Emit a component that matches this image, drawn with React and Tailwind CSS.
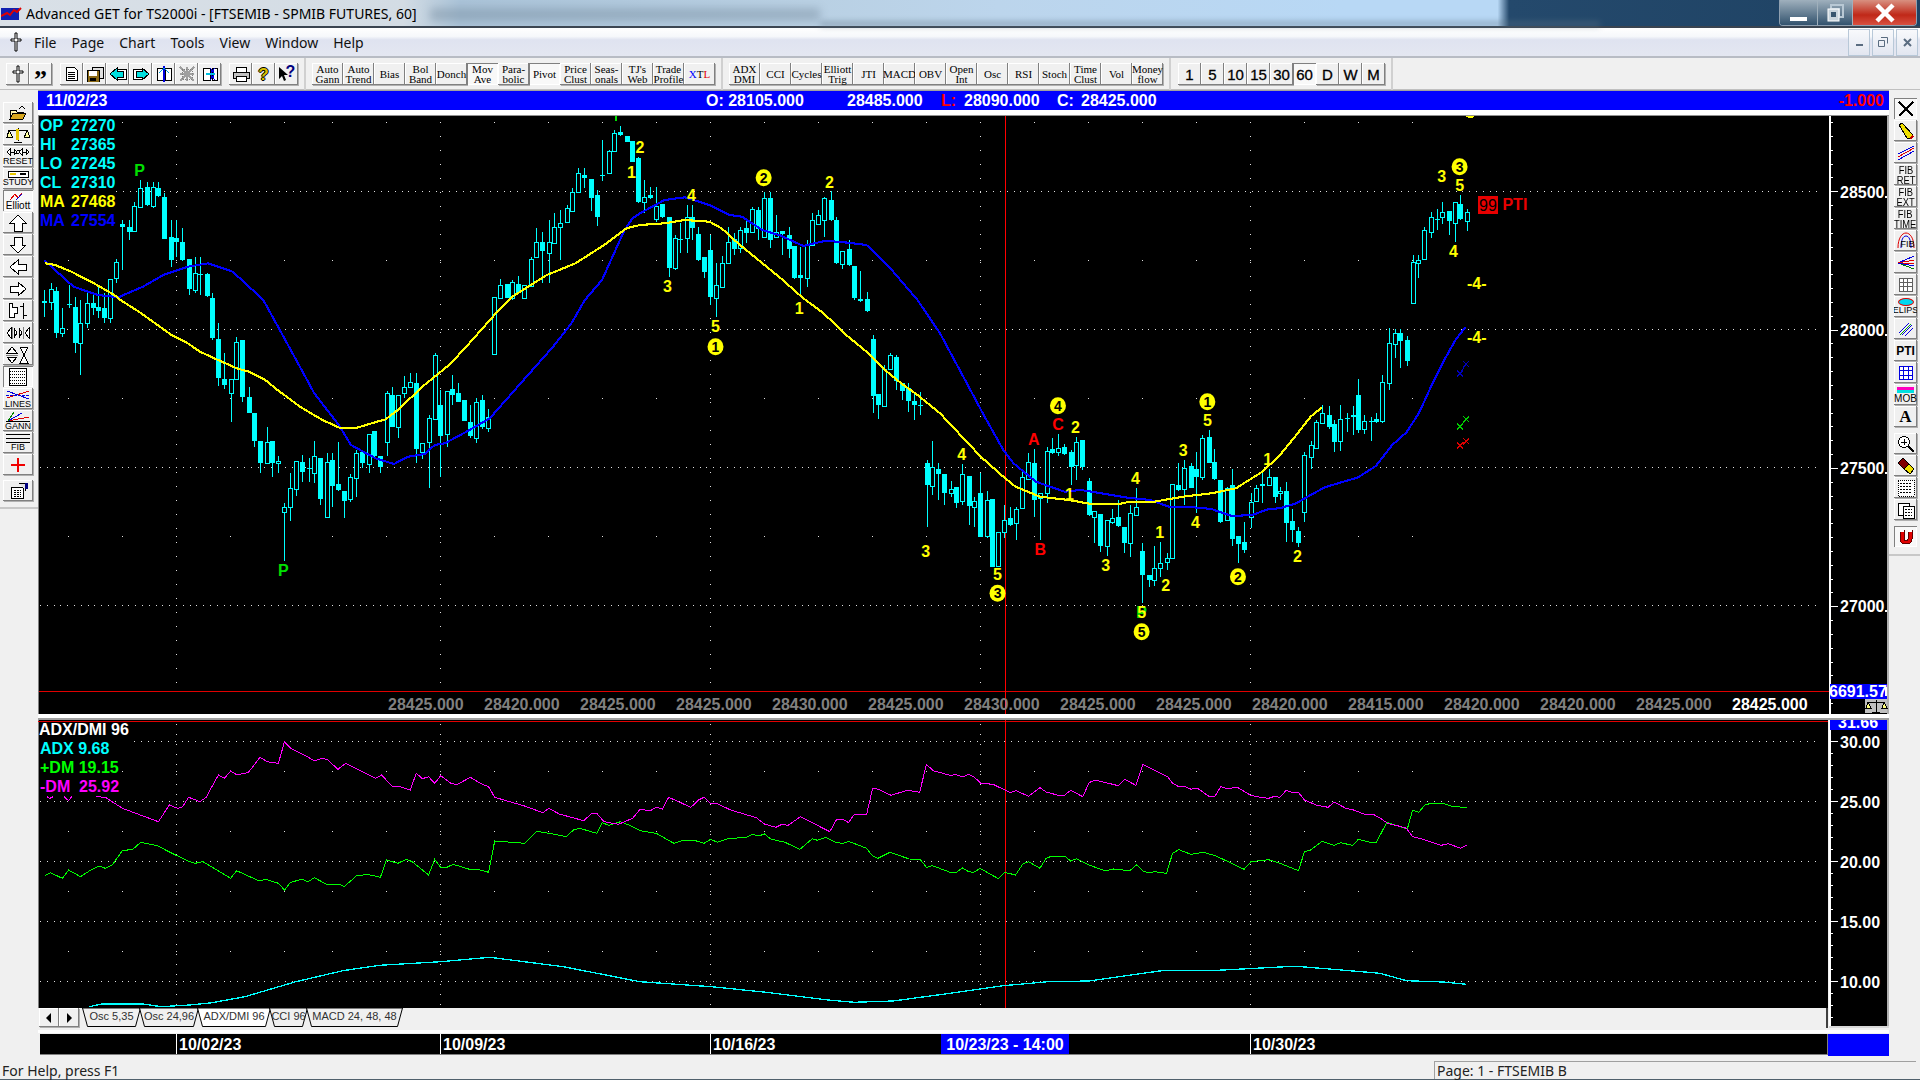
import React from "react";

const K = 0.40816;
const X = (u) => u * K;
const Y = (v) => v / 3;
const sh = (a, du, dv) => a.map(([u, h, t, b, l, f]) => [u + du, h + dv, t + dv, b + dv, l + dv, f]);
const pl = (a, du = 0, dv = 0) => a.map(([u, v]) => [u + du, v + dv]);
const W = (a) => a.map(([u, v]) => `${X(u).toFixed(1)},${Y(v).toFixed(1)}`).join(" ");
const WL = (a) => a.map(([u, v]) => `${X(u).toFixed(1)},${(680 + v / 3).toFixed(1)}`).join(" ");

const c1 = [[109,870,903,908,950,0],[124,848,868,906,930,1],[138,860,872,1000,1015,0],[153,925,985,1000,1010,1],[168,855,912,916,925,0],[183,890,920,1028,1058,0],[197,900,968,1030,1125,1],[212,870,908,968,985,1],[227,875,908,925,945,0],[241,860,922,933,955,0],[256,880,925,955,970,0],[270,838,838,955,970,1],[285,778,787,835,850,1],[300,660,672,682,810,0],[315,660,680,695,720,0],[329,605,617,692,695,1],[344,540,565,620,622,1],[359,545,562,615,618,0],[374,545,562,618,625,1],[388,545,565,588,590,0],[403,580,592,716,718,0],[418,660,712,780,800,0],[432,660,715,725,770,0],[447,685,727,780,782,0],[462,778,778,866,885,0],[477,770,820,870,880,1],[491,770,822,826,885,0],[506,820,822,888,890,0],[520,880,893,1013,1020,0]];
const c4 = [[535,68,118,233,258,0],[550,160,238,255,268,0],[565,238,238,280,365,1],[579,112,127,238,240,1],[594,120,120,292,305,0],[609,260,292,338,340,0],[623,338,340,422,440,0],[638,423,423,490,520,0],[653,380,427,490,492,1],[667,423,423,488,532,0],[682,468,482,490,520,1],[697,610,622,635,782,1],[711,518,565,620,662,1],[726,482,482,568,587,1],[741,465,487,515,545,0],[756,475,503,506,545,0],[770,423,468,520,550,1],[785,475,475,597,615,0],[800,460,487,650,652,1],[814,458,480,557,620,0],[829,427,553,570,572,0],[843,573,573,603,653,0],[858,522,532,598,607,1],[873,450,460,535,590,1],[888,457,457,490,505,0],[903,403,403,492,518,1],[917,393,393,468,470,0],[932,468,468,500,520,0],[947,272,280,425,467,1],[961,262,285,380,382,0],[976,285,285,382,413,1],[991,228,260,280,293,1],[1005,220,247,262,264,1],[1020,220,250,447,488,0],[1035,428,428,455,477,1],[1050,345,355,425,563,1],[1065,160,165,358,360,1],[1079,270,316,407,530,0],[1094,272,272,402,440,1],[1108,225,268,285,315,0],[1123,250,280,305,307,0],[1138,300,300,362,364,0],[1152,315,367,408,415,0],[1167,293,305,415,430,1],[1181,285,300,380,388,0],[1196,328,350,383,395,1]];
const c1b = [[1211,890,892,1063,1065,1],[1226,838,855,893,895,1],[1241,853,853,893,895,0],[1255,840,847,895,900,1],[1270,828,853,878,880,0],[1285,855,855,893,895,1],[1300,770,778,858,860,1],[1314,685,727,772,774,1],[1329,695,725,752,850,0],[1344,660,725,760,850,1],[1358,640,680,728,730,1],[1373,630,670,682,780,1],[1388,615,625,665,667,1],[1402,565,577,633,635,1],[1417,505,520,575,577,1],[1432,505,525,535,565,0],[1447,537,537,593,633,0],[1462,570,586,650,678,0],[1476,420,525,528,542,0],[1491,450,452,520,522,1],[1505,390,400,452,454,1],[1520,377,397,405,407,0],[1535,408,408,425,427,0],[1549,422,422,485,487,0],[1564,470,475,605,610,0]];
const c2 = [[11,540,592,607,640,1],[25,560,585,595,597,0],[40,560,618,658,665,1],[55,612,612,652,654,0],[70,652,652,803,830,0],[85,705,715,805,810,1],[99,670,716,719,760,0],[114,615,650,715,760,1],[128,615,652,685,720,0],[143,680,702,780,782,0],[158,770,770,815,835,0],[172,705,750,890,915,0],[187,790,855,893,952,1],[202,768,790,860,862,1],[216,680,725,790,792,1],[231,700,717,747,765,0],[246,680,690,745,760,1],[260,660,685,700,730,0],[275,620,628,695,697,1],[290,620,630,686,720,0],[305,575,595,712,714,1],[319,575,595,720,745,0],[334,645,695,710,712,1],[349,693,693,702,765,0],[364,680,705,747,775,0],[378,738,738,835,838,0],[393,740,825,833,885,0],[408,720,735,835,860,1],[422,640,660,735,737,1],[437,630,645,673,675,1],[452,590,595,660,710,1],[467,572,600,660,662,0],[481,650,660,790,792,0],[496,752,752,792,808,1],[511,720,748,795,797,0],[525,798,798,893,900,0],[540,812,897,903,905,0],[555,875,897,933,935,0]];
const c5 = [[570,105,118,288,340,0],[584,283,283,315,357,0],[599,195,207,317,319,1],[613,160,165,207,209,1],[628,165,172,243,270,0],[643,250,250,272,300,0],[657,250,265,303,335,0],[672,280,303,315,360,0],[687,275,316,319,345,0],[702,480,490,555,680,0],[716,423,502,557,585,1],[731,490,507,522,600,0],[746,522,522,578,615,0],[761,543,568,580,590,1],[775,562,562,608,625,0],[790,492,523,602,615,1],[805,528,528,618,675,0],[819,590,602,620,680,1],[834,520,580,710,712,0],[849,573,600,707,715,1],[863,597,597,800,802,0],[878,695,695,797,799,1],[893,615,661,695,713,1],[907,622,655,675,677,0],[922,620,628,668,720,1],[937,515,532,623,625,1],[951,460,487,537,539,1],[966,447,490,600,650,0],[981,580,580,595,720,1],[996,440,454,578,608,1],[1010,415,447,460,462,0],[1025,403,445,455,468,1],[1040,432,440,462,464,0],[1055,450,457,500,555,0],[1069,412,425,494,540,1],[1084,420,420,500,510,0],[1099,535,543,645,647,0],[1113,633,633,650,728,1],[1128,642,642,738,755,0],[1143,660,660,737,768,1],[1157,628,655,665,672,1],[1172,600,652,677,680,0],[1187,680,680,730,760,0],[1201,615,640,730,770,1],[1216,565,622,645,648,1],[1231,730,753,825,910,0],[1246,825,825,840,860,0],[1260,738,805,840,858,1],[1275,725,790,803,830,1],[1290,760,775,785,810,1],[1304,552,552,775,777,1],[1319,490,555,570,572,0],[1334,480,503,567,615,1],[1349,490,498,563,565,0],[1363,455,508,530,640,0],[1378,405,415,530,540,1],[1393,390,412,488,490,0],[1407,447,487,537,539,0],[1422,540,540,665,670,0],[1437,560,563,660,662,1],[1451,507,555,717,738,0],[1466,708,708,732,788,0],[1481,665,727,750,760,0],[1496,580,607,652,685,1],[1510,555,563,603,605,1],[1525,520,552,557,610,0],[1540,508,530,555,557,1],[1555,532,532,590,610,0]];
const c6 = [[1,560,572,580,600,1],[15,545,573,668,725,0],[30,628,663,690,725,0],[45,680,693,728,740,0],[60,457,466,635,665,1],[75,423,436,470,507,1],[89,360,367,443,445,1],[104,315,340,370,372,1],[119,318,345,380,388,0],[133,360,372,425,455,0],[148,315,358,422,453,1],[163,340,353,356,395,0],[178,318,345,350,405,0],[192,238,285,390,400,0],[207,345,362,388,402,1],[222,350,362,365,422,0],[236,340,358,367,369,0],[251,225,247,362,370,1],[266,85,130,250,270,1],[281,88,100,133,175,1],[295,87,100,122,203,0],[310,108,120,182,198,0]];
const c3 = [[325,765,787,908,910,1],[339,765,780,790,835,1],[354,680,690,778,780,1],[369,635,650,695,713,1],[384,628,657,660,690,0],[398,605,637,652,672,1],[413,632,632,662,705,0],[428,605,607,670,725,1],[442,585,612,658,660,0],[457,628,637,662,692,1]];
const candles = [...c1, ...sh(c4, 0, 900), ...c1b, ...sh(c2, 1568, 0), ...sh(c5, 1568, 900), ...sh(c6, 3136, 900), ...sh(c3, 3136, 0)];

const yellowMA = [...pl([[110,790],[135,795],[175,815],[230,850],[280,885],[295,900]]), ...pl([[340,35],[380,70],[420,105],[460,130],[490,155],[525,175],[580,205],[610,215],[650,240],[680,270],[735,320],[790,360],[835,385],[870,385],[915,368],[945,358],[980,325],[1030,265],[1065,230],[1100,195],[1135,150],[1175,95],[1215,40]],0,900), ...pl([[1255,890],[1340,825],[1410,790],[1480,735],[1535,685],[1568,675]]), ...pl([[60,670],[110,660],[170,665],[200,685],[240,730],[300,790],[345,835],[400,895]],1568), ...pl([[450,40],[500,100],[555,155],[600,210],[640,250],[680,285],[735,340],[785,405],[835,470],[890,530],[920,560],[980,590],[1050,600],[1110,613],[1170,613],[1200,605],[1260,605],[1330,590],[1400,580],[1460,565],[1525,515],[1568,465]],1568,900), ...pl([[40,405],[75,350],[103,322]],3136,900)];
const blueMA = [...pl([[108,780],[135,810],[180,860],[240,885],[290,892],[350,860],[400,825],[460,800],[510,790],[570,815],[610,860],[645,900]]), ...pl([[690,100],[730,190],[770,280],[830,375],[860,435],[920,475],[965,492],[1000,470],[1040,462],[1065,435],[1090,430],[1140,397],[1200,355],[1290,230],[1355,140],[1400,70],[1433,0]],0,900), ...pl([[1475,840],[1530,690],[1550,655],[1568,640]]), ...pl([[60,600],[110,592],[170,615],[220,645],[250,650],[300,690],[345,707],[400,738],[455,722],[510,728],[555,735],[610,800],[680,900]],1568), ...pl([[735,100],[790,225],[840,340],[890,450],[915,490],[970,545],[1040,575],[1080,570],[1130,580],[1195,593],[1250,600],[1300,622],[1340,620],[1400,627],[1450,648],[1500,645],[1540,627],[1568,625]],1568,900), ...pl([[40,610],[75,585],[110,562],[150,547],[190,533],[235,498],[275,435],[310,397],[340,340],[370,260],[400,185],[430,120],[455,80]],3136,900)];

const magenta = [...pl([[235,350],[258,352],[300,385],[388,425],[415,375],[435,385],[447,381],[462,352],[490,365],[505,352],[535,285],[550,295],[565,273],[580,284],[608,278],[637,232],[655,245],[682,250],[697,185],[712,205],[745,225],[770,242],[790,235],[803,240],[828,268],[847,250],[920,295],[935,285],[960,318],[975,318],[1005,330],[1020,280],[1035,296],[1050,290],[1065,310],[1080,287],[1105,310],[1120,314],[1152,292],[1180,312],[1197,320],[1212,352],[1285,378],[1330,398],[1345,385],[1370,402],[1430,422],[1450,400],[1462,400],[1480,425],[1515,433],[1550,415],[1568,388]]), ...pl([[25,392],[40,382],[55,387],[70,352],[125,382],[143,360],[157,352],[173,370],[188,370],[222,390],[285,413],[305,432],[333,442],[348,433],[363,436],[393,410],[465,455],[482,418],[497,418],[511,428],[525,403],[555,405],[570,325],[585,328],[615,346],[655,331],[685,337],[702,253],[718,272],[760,286],[775,284],[790,291],[805,283],[818,290],[835,310],[865,313],[907,338],[922,332],[952,349],[980,323],[995,336],[1025,346],[1040,346],[1055,331],[1085,350],[1100,308],[1115,300],[1172,317],[1187,298],[1215,316],[1232,253],[1293,290],[1305,310],[1320,320],[1335,319],[1350,328],[1365,324],[1395,350],[1408,350],[1423,320],[1435,325],[1465,323],[1495,345],[1510,350],[1540,355],[1555,349],[1568,352]],1568), ...pl([[15,331],[30,337],[45,337],[60,360],[90,376],[118,382],[133,366],[160,384],[180,390],[205,402],[230,404],[245,414],[265,431],[290,438],[310,445],[325,470],[350,478],[395,496],[412,491],[443,505],[457,496]],3136)];
const green = [...pl([[110,587],[123,578],[153,595],[168,570],[197,590],[220,572],[243,558],[258,565],[275,555],[300,512],[325,508],[345,487],[385,497],[430,525],[465,545],[478,550],[497,545],[565,595],[580,572],[635,603],[652,598],[682,610],[697,630],[712,607],[740,598],[755,605],[770,593],[800,613],[832,613],[843,620],[873,588],[900,583],[932,592],[947,540],[975,550],[995,538],[1010,545],[1050,585],[1065,538],[1080,563],[1093,563],[1110,553],[1150,568],[1170,568],[1197,577],[1212,483],[1285,490],[1315,454],[1345,460],[1387,470],[1405,450],[1420,445],[1462,460],[1475,428],[1492,436],[1520,425],[1545,437],[1568,452]]), ...pl([[40,460],[83,490],[105,481],[130,480],[157,490],[173,478],[190,487],[215,476],[260,472],[275,463],[290,468],[305,462],[320,477],[355,487],[392,508],[422,476],[435,481],[455,472],[482,488],[497,490],[511,484],[555,505],[570,528],[583,535],[612,517],[660,537],[687,539],[702,562],[717,557],[760,577],[775,577],[790,564],[805,575],[818,577],[833,565],[878,596],[893,577],[920,585],[938,552],[952,545],[980,565],[995,535],[1010,528],[1040,528],[1055,543],[1070,536],[1100,555],[1140,573],[1160,567],[1200,572],[1217,554],[1232,573],[1246,578],[1260,575],[1290,580],[1305,520],[1320,509],[1350,523],[1380,517],[1410,527],[1480,568],[1497,545],[1540,539],[1568,550]],1568), ...pl([[45,572],[60,515],[75,510],[103,484],[133,496],[148,488],[178,496],[192,478],[220,487],[236,487],[262,427],[312,447],[325,391],[340,397],[355,375],[370,370],[400,370],[420,378],[457,383]],3136)];
const adx = [...pl([[218,980],[250,972],[350,972],[395,980],[465,975],[520,968],[600,950],[725,905],[840,872],[930,856],[1080,845],[1200,832],[1380,860],[1568,905]]), ...pl([[175,920],[310,937],[460,960],[525,967],[620,963],[760,940],[890,917],[1000,905],[1100,903],[1285,871],[1415,871],[1568,861]],1568), ...pl([[40,859],[130,868],[245,880],[310,902],[400,906],[457,913]],3136)];

const majors = [176, 440, 710, 980, 1250];
const sparse = [68,122,176,230,284,332,386,440,494,548,602,656,710,764,818,872,926,980,1034,1088,1142,1196,1250,1304,1358,1412];

const L1 = 1568, V5 = 900;
const nums = [
  [342,510,"P","#00e000"],[694,1710,"P","#00e000"],[L1+1229,V5+937,"P","#00e000"],[1547,517,"1"],[1568,443,"2"],
  [L1+126,585,"4"],[L1+464,546,"2"],[L1+67,858,"3"],[L1+390,V5+25,"1"],[L1+185,V5+80,"5"],
  [L1+700,V5+753,"3"],[L1+788,V5+462,"4"],[L1+876,V5+822,"5"],[L1+965,V5+418,"A","#ff0000"],[L1+981,V5+748,"B","#ff0000"],[L1+1024,V5+373,"C","#ff0000"],
  [L1+1067,V5+382,"2"],[L1+1052,V5+583,"1"],[L1+1214,V5+535,"4"],[L1+1141,V5+795,"3"],[L1+1273,V5+697,"1"],[L1+1288,V5+855,"2"],[L1+1229,V5+937,"5"],
  [L1+1331,V5+450,"3"],[L1+1390,V5+360,"5"],[L1+1361,V5+667,"4"],[L1+1538,V5+478,"1"],
  [3136+43,V5+768,"2"],[3136+396,530,"3"],[3136+440,555,"5"],[3136+425,753,"4"],[3136+482,850,"-4-"],[3136+482,V5+112,"-4-"],
];
const circles = [[L1+303,533,"2"],[L1+185,V5+140,"1"],[L1+876,V5+880,"3"],[L1+1024,V5+317,"4"],[L1+1229,V5+995,"5"],[L1+1390,V5+305,"1"],[L1+1465,V5+830,"2"],[3136+440,500,"3"]];
const bottoms = ["28425","28420","28425","28425","28430","28425","28430","28425","28425","28420","28415","28420","28420","28425","28425"];

function Candle({ c }) {
  const [u, h, t, b, l, hollow] = c;
  const x = Math.round(X(u));
  const top = Math.round(Y(t)), bot = Math.round(Y(b));
  return (
    <g>
      <line x1={x + 0.5} x2={x + 0.5} y1={Y(h)} y2={Y(l)} stroke="#00ffff" />
      {hollow ? (
        <rect x={x - 1.5} y={top + 0.5} width={4} height={Math.max(bot - top, 2)} fill="#000" stroke="#00ffff" />
      ) : (
        <rect x={x - 2} y={top} width={5} height={Math.max(bot - top, 1)} fill="#00ffff" />
      )}
    </g>
  );
}

const Mark = ({ x, y, c }) => (
  <g stroke={c} fill="none">
    <path d={`M${x - 3} ${y - 3}l6 6m0 -6l-6 6`} />
  </g>
);

function MainChart() {
  const ticks = [];
  for (let y = 191.3 - 13.83 * 5; y < 714; y += 13.83) ticks.push(y);
  const txt = "text-[16px] font-bold";
  return (
    <svg viewBox="38 116 1851 598" width="1851" height="598" className="block shrink-0">
      <defs>
        <clipPath id="ch"><rect x="38" y="116" width="1791" height="598" /></clipPath>
      </defs>
      <rect x="38" y="116" width="1851" height="598" fill="#000" />
      <rect x="38" y="116" width="1" height="598" fill="#808080" />
      <g shapeRendering="crispEdges" clipPath="url(#ch)">
        {[[116,191.5],[40,329.5],[40,467.5],[40,605.5]].map(([x0, y]) => (
          <line key={y} x1={x0} x2="1820" y1={y} y2={y} stroke="#e0e0e0" strokeDasharray="1 5.8" />
        ))}
        {majors.map((x) => (
          <line key={x} x1={x + 0.5} x2={x + 0.5} y1="122" y2="690" stroke="#e0e0e0" strokeDasharray="1 13" />
        ))}
        {[122, 260, 398, 536].map((y) => sparse.filter((x) => y !== 122 || x > 100).map((x) => <rect key={y + "-" + x} x={x} y={y} width="1" height="1" fill="#e0e0e0" />))}
        <line x1="39" x2="1829" y1="691.5" y2="691.5" stroke="#e00000" />
        <line x1="1005.5" x2="1005.5" y1="116" y2="714" stroke="#ff0000" />
        {candles.map((c, i) => <Candle key={i} c={c} />)}
        <polyline points={W(blueMA)} fill="none" stroke="#0000ff" strokeWidth="2.100" />
        <polyline points={W(yellowMA)} fill="none" stroke="#ffff00" strokeWidth="2.100" />
        <path d={`M${X(3136 + 441)} ${Y(V5 + 221)}L${X(3136 + 456)} ${Y(V5 + 192)}`} stroke="#0000c0" fill="none" />
        <Mark x={X(3136 + 441)} y={Y(V5 + 221)} c="#0000c0" /><Mark x={X(3136 + 456)} y={Y(V5 + 192)} c="#0000c0" />
        <path d={`M${X(3136 + 441)} ${Y(V5 + 380)}L${X(3136 + 456)} ${Y(V5 + 358)}`} stroke="#00d000" fill="none" />
        <Mark x={X(3136 + 441)} y={Y(V5 + 380)} c="#00d000" /><Mark x={X(3136 + 456)} y={Y(V5 + 358)} c="#00d000" />
        <path d={`M${X(3136 + 441)} ${Y(V5 + 436)}L${X(3136 + 456)} ${Y(V5 + 424)}`} stroke="#e00000" fill="none" />
        <Mark x={X(3136 + 441)} y={Y(V5 + 436)} c="#e00000" /><Mark x={X(3136 + 456)} y={Y(V5 + 424)} c="#e00000" />
        <rect x={X(1510) - 1} y="116" width="2" height="5" fill="#00e000" />
        <ellipse cx={X(3136 + 466)} cy="109" rx="8" ry="9" fill="#ffff00" />
      </g>
      {nums.map(([u, v, t, col], i) => (
        <text key={i} x={X(u)} y={Y(v)} fill={col || "#ffff00"} textAnchor="middle" dominantBaseline="central" className="text-[16px] font-bold">{t}</text>
      ))}
      {circles.map(([u, v, t], i) => (
        <g key={i}>
          <ellipse cx={X(u)} cy={Y(v)} rx="8" ry="8.500" fill="#ffff00" />
          <text x={X(u)} y={Y(v)} fill="#000" textAnchor="middle" dominantBaseline="central" className="text-[14px] font-bold">{t}</text>
        </g>
      ))}
      <rect x="1478" y="196" width="20" height="18" fill="#e80000" />
      <text x="1488" y="205" fill="#000" textAnchor="middle" dominantBaseline="central" className="text-[16px]">99</text>
      <text x={1280 + 545 * K} y="204.500" fill="#e80000" dominantBaseline="central" className="text-[16px] font-bold">PTI</text>
      {[["OP","27270","#00ffff"],["HI","27365","#00ffff"],["LO","27245","#00ffff"],["CL","27310","#00ffff"],["MA","27468","#ffff00"],["MA","27554","#0000ff"]].map(([a, b, c], i) => (
        <g key={i} fill={c} className={txt}>
          <text x="40" y={125 + 19 * i} dominantBaseline="central">{a}</text>
          <text x="71" y={125 + 19 * i} dominantBaseline="central">{b}</text>
        </g>
      ))}
      {bottoms.map((b, i) => (
        <text key={i} x={388 + 96 * i} y="704" dominantBaseline="central" fill={i === 14 ? "#fff" : "#808080"} className={txt}>{b}.000</text>
      ))}
      <g shapeRendering="crispEdges">
        <rect x="1829" y="116" width="1.5" height="598" fill="#fff" />
        {ticks.map((y, i) => <line key={i} x1="1830" x2={(i % 10 === 5) ? 1838 : 1833} y1={Math.round(y) + 0.5} y2={Math.round(y) + 0.5} stroke="#fff" />)}
        <rect x="1887" y="116" width="2" height="598" fill="#b0b0b0" />
      </g>
      {[[192,"28500"],[330,"28000"],[468,"27500"],[606,"27000"]].map(([y, t]) => (
        <g key={t}>
          <text x="1840" y={y} fill="#fff" dominantBaseline="central" className={txt}>{t}</text>
          <rect x="1885" y={y + 4} width="2" height="2" fill="#fff" />
        </g>
      ))}
      <rect x="1830" y="684" width="57" height="15" fill="#0000ff" />
      <text x="1829" y="691.500" fill="#fff" dominantBaseline="central" className={txt}>6691.57</text>
      <rect x="1885" y="687" width="2" height="9" fill="#fff" />
      <g transform="translate(1865 699)" shapeRendering="crispEdges">
        <rect width="22" height="14" fill="#c0c0c0" />
        <path d="M11 1v12M3 3h16M3 3l-2 6h5zM19 3l-2 6h5zM7 13h8" stroke="#000" fill="#ffff80" />
      </g>
    </svg>
  );
}

function LowerChart() {
  const txt = "text-[16px] font-bold";
  const fr = (pts) => <polyline points={WL(pts)} fill="none" stroke="#ff00ff" />;
  return (
    <svg viewBox="38 720 1790 288" width="1790" height="288" className="block shrink-0">
      <rect x="38" y="720" width="1790" height="288" fill="#000" />
      <rect x="38" y="720" width="1" height="288" fill="#808080" />
      <g shapeRendering="crispEdges">
        <line x1="38" x2="1828" y1="721.5" y2="721.5" stroke="#e00000" />
        {[[134,741.5],[40,801.5],[40,861.5],[40,921.5],[40,981.5]].map(([x0, y]) => (
          <line key={y} x1={x0} x2="1820" y1={y} y2={y} stroke="#e0e0e0" strokeDasharray="1 5.8" />
        ))}
        {majors.map((x) => <line key={x} x1={x + 0.5} x2={x + 0.5} y1="724" y2="1006" stroke="#e0e0e0" strokeDasharray="1 9" />)}
        {[771, 831, 891, 951].map((y) => sparse.map((x) => <rect key={y + "-" + x} x={x} y={y} width="1" height="1" fill="#e0e0e0" />))}
        <line x1="1005.5" x2="1005.5" y1="720" y2="1008" stroke="#ff0000" />
        <polyline points={WL(adx)} fill="none" stroke="#00ffff" strokeWidth="1.300" />
        <polyline points={WL(green)} fill="none" stroke="#00ff00" />
        <polyline points={WL(magenta)} fill="none" stroke="#ff00ff" />
        {fr([[115,350],[122,355],[130,350]])}
        {fr([[157,350],[168,362],[176,350]])}
      </g>
      <g className={txt}>
        <text x="39" y="729" fill="#fff" dominantBaseline="central">ADX/DMI 96</text>
        <text x="40" y="748" fill="#00ffff" dominantBaseline="central">ADX 9.68</text>
        <text x="40" y="767" fill="#00ff00" dominantBaseline="central">+DM 19.15</text>
        <text x="40" y="786" fill="#ff00ff" dominantBaseline="central">-DM</text>
        <text x="79" y="786" fill="#ff00ff" dominantBaseline="central">25.92</text>
      </g>
    </svg>
  );
}

function LowerAxis() {
  const t = [];
  for (let y = 741.5 - 12; y < 1025; y += 12) t.push(y);
  return (
    <svg viewBox="1828 720 61 308" width="61" height="308" className="block shrink-0">
      <defs><clipPath id="bx"><rect x="1830" y="720" width="57" height="10" /></clipPath></defs>
      <rect x="1828" y="720" width="61" height="308" fill="#f0f0f0" />
      <rect x="1829" y="720" width="58" height="307" fill="#000" />
      <g shapeRendering="crispEdges">
        <rect x="1829" y="720" width="1.5" height="307" fill="#fff" />
        {t.map((y, i) => <line key={i} x1="1830" x2={i % 5 === 1 ? 1838 : 1833} y1={y} y2={y} stroke="#fff" />)}
        <rect x="1887" y="720" width="2" height="307" fill="#b0b0b0" />
        <rect x="1829" y="1026" width="60" height="2" fill="#d8d8d8" />
        <rect x="1830" y="720" width="57" height="10" fill="#0000ff" />
      </g>
      <text x="1838" y="722" fill="#fff" dominantBaseline="central" clipPath="url(#bx)" className="text-[16px] font-bold">31.66</text>
      {[[742,"30.00"],[802,"25.00"],[862,"20.00"],[922,"15.00"],[982,"10.00"]].map(([y, s]) => (
        <text key={s} x="1840" y={y} fill="#fff" dominantBaseline="central" className="text-[16px] font-bold">{s}</text>
      ))}
    </svg>
  );
}

const raised = "shadow-[inset_-1px_-1px_0_#808080,inset_1px_1px_0_#ffffff,1px_1px_0_#b0b0b0] bg-[#f0f0f0]";
const sunken = "shadow-[inset_1px_1px_0_#808080,inset_-1px_-1px_0_#ffffff] bg-[#f8f8f8]";

const Sv = ({ w = 20, h = 18, children }) => (
  <svg width={w} height={h} viewBox={`0 0 ${w} ${h}`} className="block" shapeRendering="crispEdges">{children}</svg>
);

const Ic = ({ children, sunk, cls = "w-[30px] h-[21px] ml-[3px] mb-[1px]" }) => (
  <div className={`${cls} ${sunk ? sunken : raised} flex flex-col items-center justify-center overflow-hidden shrink-0`}>{children}</div>
);

const Cap = ({ children, cls = "" }) => <span className={`text-[9px] leading-[9px] text-black ${cls}`}>{children}</span>;

const Arrow = ({ d }) => (
  <Sv w={20} h={18}><polygon points={d} fill="#fff" stroke="#000" strokeWidth="1" /></Sv>
);

const Scales = () => (
  <Sv w={24} h={18}>
    <path d="M12 2v13M3 4h18M3 4L1 11h5.5zM21 4l-2.5 7H24zM8 16h8" stroke="#000" fill="#ffffa0" />
    <rect x="10" y="3" width="3" height="11" fill="#e8c800" />
  </Sv>
);

function LeftBar() {
  return (
    <div className="w-[38px] shrink-0 flex flex-col pt-[12px]">
      <Ic><Sv w={18} h={16}><path d="M1 14V5h6l1 2h6v2" stroke="#000" fill="#fff8b0" /><path d="M1 14l3-6h13l-3 6z" fill="#d8a820" stroke="#000" /><path d="M10 4l3-3 3 3" stroke="#000" fill="none" /></Sv></Ic>
      <Ic><Scales /></Ic>
      <Ic><Sv w={24} h={9}><path d="M1 4l3-3v6zM11 4L8 1v6zM13 4l3-3v6zM23 4l-3-3v6zM4 4h4M16 4h4" stroke="#000" fill="#fff" /><circle cx="12" cy="4" r="1.5" fill="none" stroke="#000" /></Sv><Cap>RESET</Cap></Ic>
      <Ic><Sv w={22} h={8}><rect x="1" y="1" width="20" height="6" fill="#fff" stroke="#000" /><rect x="3" y="3" width="6" height="2" fill="#e8c800" /><rect x="13" y="3" width="6" height="2" fill="#000" /></Sv><Cap>STUDY</Cap></Ic>
      <Ic sunk><Sv w={20} h={9}><path d="M2 8l5-6 3 4 4-5" stroke="#e00000" fill="none" /><path d="M8 8l6-6" stroke="#0000e0" /></Sv><Cap cls="text-[10px]">Elliott</Cap></Ic>
      <Ic><Arrow d="10,1 2,9 6,9 6,17 14,17 14,9 18,9" /></Ic>
      <Ic><Arrow d="10,17 2,9 6,9 6,1 14,1 14,9 18,9" /></Ic>
      <Ic><Arrow d="2,9 10,2 10,6 18,6 18,12 10,12 10,16" /></Ic>
      <Ic><Arrow d="18,9 10,2 10,6 2,6 2,12 10,12 10,16" /></Ic>
      <Ic><Sv w={24} h={18}><path d="M3 1v14h5v-4h3V5H6V1zM17 1v16M17 4h-3M17 13h4" stroke="#000" fill="#fff" /></Sv></Ic>
      <Ic><Sv w={24} h={14}><path d="M1 7l4-5v10zM8 2v10l3-5zM16 7l-3-5v10zM23 2v10l-4-5z" stroke="#000" fill="#fff" /><path d="M6.500 1v12M17.500 1v12" stroke="#808080" /></Sv></Ic>
      <Ic><Sv w={24} h={18}><path d="M6 1l5 6H1zM6 17l5-6H1zM14 1h8l-4 8 4 8h-8l4-8z" stroke="#000" fill="#fff" /><path d="M0 9h12" stroke="#808080" /></Sv></Ic>
      <Ic sunk><Sv w={18} h={18}>
        <rect x="0.500" y="0.500" width="17" height="17" fill="#fff" stroke="#000" />
        {[3, 6, 9, 12, 15].map((y) => <line key={y} x1="1" x2="17" y1={y + 0.5} y2={y + 0.5} stroke="#000" strokeDasharray="1 1" />)}
      </Sv></Ic>
      <Ic><Sv w={24} h={11}><path d="M1 9L23 2" stroke="#e00000" /><path d="M1 2l22 8" stroke="#0000e0" /><path d="M0 6h24" stroke="#0000e0" strokeDasharray="3 1" /></Sv><Cap>LINES</Cap></Ic>
      <Ic><Sv w={24} h={11}><path d="M2 10L23 6" stroke="#e00000" /><path d="M2 10L16 2" stroke="#0000e0" /><path d="M2 10L8 1" stroke="#008000" /><path d="M0 10h24" stroke="#000" /></Sv><Cap>GANN</Cap></Ic>
      <Ic><Sv w={24} h={10}><path d="M0 1.500h24M0 5.500h24M0 9.500h24" stroke="#000" /></Sv><Cap>FIB</Cap></Ic>
      <Ic><Sv w={18} h={18}><path d="M9 2v14M2 9h14" stroke="#f00000" strokeWidth="2" /></Sv></Ic>
      <div className="h-[4px] shrink-0" />
      <Ic><Sv w={22} h={17}><path d="M4 5h12v11H4z" fill="#fff" stroke="#000" /><path d="M7 8h7M7 10h7M7 12h7M7 14h7" stroke="#000" strokeDasharray="2 1" /><path d="M12 1h6l1 8" fill="#e0e0e0" stroke="#000" /><rect x="18" y="1" width="3" height="6" fill="#000080" /></Sv></Ic>
      <div className="mt-[5px] h-[2px] w-full bg-[#c8c8c8]" />
    </div>
  );
}

const RB = "w-[23px] h-[21px] ml-[5px] mb-[1px]";
const F2 = ({ a, b }) => <span className="flex flex-col items-center text-[11px] leading-[10px] text-black [transform:scaleX(0.85)]"><span>{a}</span><span>{b}</span></span>;

function RightBar() {
  return (
    <div className="w-[31px] shrink-0 flex flex-col pt-[8px]">
      <Ic cls={RB} sunk><Sv w={18} h={16}><path d="M2 1l14 14M16 1L2 15" stroke="#000" strokeWidth="1.500" /></Sv></Ic>
      <Ic cls={RB}><Sv w={18} h={18} ><path d="M2 3l3-2 11 12-2 4-4-1z" fill="#f0e000" stroke="#000" /><path d="M13 17l3-3" stroke="#c00000" strokeWidth="2" /></Sv></Ic>
      <Ic cls={RB}><Sv w={18} h={16}><path d="M1 12L17 3" stroke="#e00000" /><path d="M1 9l16-8" stroke="#0000e0" /><path d="M1 15L17 6" stroke="#0000e0" /></Sv></Ic>
      <Ic cls={RB}><F2 a="FIB" b="RET" /></Ic>
      <Ic cls={RB}><F2 a="FIB" b="EXT" /></Ic>
      <Ic cls={RB}><F2 a="FIB" b="TIME" /></Ic>
      <Ic cls={RB}><span className="relative block w-[18px] h-[18px]"><svg width="18" height="18" viewBox="0 0 18 18" className="absolute left-0 top-0"><path d="M1 16C1 6 5 1 9 1s8 5 8 15" fill="none" stroke="#e00000" /><path d="M4 16C4 8 6 4 9 4s5 4 5 12" fill="none" stroke="#0000e0" /></svg><span className="absolute left-[4px] top-[8px] text-[9px] leading-[9px] text-black">FIB</span></span></Ic>
      <Ic cls={RB}><Sv w={18} h={16}><path d="M1 8L17 1" stroke="#0000e0" /><path d="M1 8h16" stroke="#e00000" /><path d="M1 8l16 6" stroke="#008000" /><path d="M1 8L17 5" stroke="#e00000" /><path d="M1 8l16 3" stroke="#0000e0" /></Sv></Ic>
      <Ic cls={RB}><Sv w={16} h={16}><path d="M1.500 1.500h13v13h-13zM5.500 1v14M9.500 1v14M1 5.500h14M1 9.500h14" stroke="#606060" fill="#fff" /></Sv></Ic>
      <Ic cls={RB}><div className="w-[16px] h-[8px] rounded-[50%] bg-[#00d8f0] border border-[#e00000]" /><Cap>ELIPS</Cap></Ic>
      <Ic cls={RB}><Sv w={18} h={16}><path d="M2 12L12 2M5 14L15 4M8 15L16 7" stroke="#0000e0" /><path d="M3 14L14 3" stroke="#00a000" /></Sv></Ic>
      <Ic cls={RB}><span className="text-[12px] font-bold leading-none text-black">PTI</span></Ic>
      <Ic cls={RB}><Sv w={16} h={16}><path d="M1.500 1.500h13v13h-13zM5.500 1v14M10.500 1v14M1 5.500h14M1 10.500h14" stroke="#0000e0" fill="#fff" /></Sv></Ic>
      <Ic cls={RB}><div className="w-[17px] h-[3px] bg-[#ff00c0]" /><div className="w-[17px] h-[3px] bg-[#00e0e0] mb-[1px]" /><Cap cls="text-[10px]">MOB</Cap></Ic>
      <Ic cls={RB}><span className="[font-family:'Liberation_Serif',serif] text-[17px] font-bold leading-none text-black">A</span></Ic>
      <div className="h-[5px] shrink-0" />
      <Ic cls={RB}><Sv w={18} h={18}><circle cx="7" cy="7" r="5.500" fill="#fff" stroke="#000" /><path d="M11 11l6 6" stroke="#000" strokeWidth="2" /><path d="M4 7h6M7 4v6" stroke="#000" /></Sv></Ic>
      <Ic cls={RB}><Sv w={18} h={18}><path d="M1 6l5-5 6 6-5 5z" fill="#800000" stroke="#000" /><path d="M7 12l5-5 5 5-4 5z" fill="#f0e000" stroke="#000" /></Sv></Ic>
      <Ic cls={RB}><Sv w={18} h={18}><rect x="1" y="1" width="16" height="16" fill="#fff" stroke="#000" strokeDasharray="1 1" /><path d="M3 4h12M3 7h12M3 10h12M3 13h12" stroke="#000" strokeDasharray="2 1" /></Sv></Ic>
      <Ic cls={RB}><Sv w={18} h={18}><path d="M1 2h11v12H1z" fill="#fff" stroke="#000" /><path d="M6 5h11v12H6z" fill="#fff" stroke="#000" /><path d="M8 8h7M8 11h7M8 14h7" stroke="#000" strokeDasharray="2 1" /></Sv></Ic>
      <div className="h-[5px] shrink-0" />
      <Ic cls={RB} sunk><Sv w={16} h={17}><path d="M2 2h4v9q0 2 2 2t2-2V2h4v9q0 5-6 5t-6-5z" fill="#e00000" stroke="#600000" /><path d="M2 2h4v2H2zM10 2h4v2h-4z" fill="#fff" /></Sv></Ic>
      <div className="mt-[6px] h-[2px] w-full bg-[#c8c8c8]" />
    </div>
  );
}

const TB = "w-[23px] h-[22px] shrink-0";
const Tx = ({ a, b, sunk, cls = "" }) => (
  <div className={`w-[31px] h-[22px] shrink-0 flex flex-col items-center justify-center [font-family:'Liberation_Serif',serif] text-[11px] leading-[10px] text-black ${sunk ? sunken : raised} ${cls}`}>
    <span>{a}</span>{b && <span>{b}</span>}
  </div>
);
const Sep = ({ ml, mr }) => <div className={`w-[2px] h-[32px] -mt-[5px] bg-[#d0d0d0] shrink-0 ${ml} ${mr}`} />;
const Per = ({ t, sunk }) => (
  <div className={`${TB} ${sunk ? sunken : raised} flex items-center justify-center text-[15px] leading-none text-black [-webkit-text-stroke:0.3px_black]`}>{t}</div>
);
const CyanBook = ({ flip }) => (
  <Sv w={18} h={16}>
    <g transform={flip ? "matrix(-1 0 0 1 18 0)" : undefined}>
      <path d="M8 3h9v10H8" fill="#fff" stroke="#000" />
      <polygon points="1,8 8,2 8,5 14,5 14,11 8,11 8,14" fill="#00e0e0" stroke="#000" />
    </g>
  </Sv>
);

function Toolbar() {
  const I = ({ children }) => <div className={`${TB} ${raised} flex items-center justify-center`}>{children}</div>;
  return (
    <div className="h-[32px] shrink-0 bg-[#f0f0f0] flex items-start pt-[5px] pl-[6px] border-b border-[#c0c0c0]">
      <I><svg width="12" height="18" viewBox="0 0 12 18"><path d="M5 1h2v5h4v2H7v9H5V8H1V6h4z" fill="#fff" stroke="#000" /></svg></I>
      <I><span className="[font-family:'Liberation_Serif',serif] text-[26px] font-bold leading-[26px] h-[15px] text-black">”</span></I>
      <div className="w-[8px] shrink-0" />
      <I><Sv w={14} h={16}><path d="M1.500 1.500h8l3 3v10h-11z" fill="#fff" stroke="#000" /><path d="M3 6h7M3 8h7M3 10h7M3 12h7" stroke="#000" /></Sv></I>
      <I><Sv w={18} h={16}><rect x="6" y="1" width="11" height="11" fill="#e0e0e0" stroke="#000" /><rect x="1" y="4" width="12" height="12" fill="#8b6914" stroke="#000" /><rect x="3" y="5" width="8" height="5" fill="#fff" /><rect x="4" y="12" width="6" height="3" fill="#000" /></Sv></I>
      <I><CyanBook /></I>
      <I><CyanBook flip /></I>
      <I><Sv w={18} h={18}><path d="M2 3h6v12H2zM10 3h6v12h-6z" fill="#fff" stroke="#000" /><path d="M9 1v16" stroke="#0000e0" strokeWidth="2" /><path d="M4 8l5-5 5 5" stroke="#00a0e0" fill="none" /></Sv></I>
      <I><Sv w={18} h={18}><path d="M2 2l14 14M16 2L2 16M2 9h14M9 2v14" stroke="#a0a0a0" strokeWidth="2" /><path d="M4 4h10v10H4z" fill="none" stroke="#808080" strokeDasharray="1 1" /></Sv></I>
      <I><Sv w={18} h={18}><path d="M2 3h7v12H2zM11 3h5v12h-5z" fill="#fff" stroke="#000" /><path d="M9 3l5 6-5 6M14 3L9 9l5 6" stroke="#0000e0" fill="none" /><path d="M5 9h9" stroke="#00c0e0" strokeWidth="2" /></Sv></I>
      <div className="w-[8px] shrink-0" />
      <I><Sv w={18} h={16}><path d="M4 1h10v5H4z" fill="#fff" stroke="#000" /><path d="M1 6h16v6H1z" fill="#c0c0c0" stroke="#000" /><path d="M4 10h10v5H4z" fill="#fff" stroke="#000" /></Sv></I>
      <I><span className="text-[17px] font-bold leading-none text-[#d8c000] [text-shadow:1px_0_0_#000,-1px_0_0_#000,0_1px_0_#000,0_-1px_0_#000]">?</span></I>
      <I><span className="relative block w-[18px] h-[17px]"><svg width="10" height="16" viewBox="0 0 10 16" className="absolute left-0 top-0"><path d="M1 1v12l3-3 2 5 2-1-2-5h4z" fill="#000" /></svg><span className="absolute left-[8px] -top-[2px] text-[16px] font-bold leading-none text-[#000080]">?</span></span></I>
      <Sep ml="ml-[6px]" mr="mr-[6px]" />
      <Tx a="Auto" b="Gann" /><Tx a="Auto" b="Trend" /><Tx a="Bias" /><Tx a="Bol" b="Band" /><Tx a="Donch" /><Tx a="Mov" b="Ave" sunk /><Tx a="Para-" b="bolic" /><Tx a="Pivot" sunk /><Tx a="Price" b="Clust" /><Tx a="Seas-" b="onals" /><Tx a="TJ's" b="Web" /><Tx a="Trade" b="Profile" />
      <div className={`w-[31px] h-[22px] shrink-0 ${raised} flex items-center justify-center [font-family:'Liberation_Serif',serif] text-[11px]`}><span className="text-[#0000ff]">X</span><span className="text-black">T</span><span className="text-[#e00000]">L</span></div>
      <Sep ml="ml-[6px]" mr="mr-[6px]" />
      <Tx a="ADX" b="DMI" /><Tx a="CCI" /><Tx a="Cycles" /><Tx a="Elliott" b="Trig" /><Tx a="JTI" /><Tx a="MACD" cls="text-[9px]" /><Tx a="OBV" /><Tx a="Open" b="Int" /><Tx a="Osc" /><Tx a="RSI" /><Tx a="Stoch" /><Tx a="Time" b="Clust" /><Tx a="Vol" /><Tx a="Money" b="flow" />
      <Sep ml="ml-[6px]" mr="mr-[7px]" />
      {["1", "5", "10", "15", "30"].map((t) => <Per key={t} t={t} />)}
      <Per t="60" sunk />
      {["D", "W", "M"].map((t) => <Per key={t} t={t} />)}
      <Sep ml="ml-[6px]" mr="" />
    </div>
  );
}

function TitleBar() {
  return (
    <div className="relative h-[28px] shrink-0 border-b-2 border-[#3a4450] bg-[linear-gradient(90deg,#d9e0e7_0%,#d3dce4_21%,#aac3d8_24%,#b9d0e3_42%,#bcd5ec_52%,#b8d8f5_70%,#b8d8f5_78%,#24496c_78.6%,#1e4263_100%)] flex items-center [font-family:'Noto_Sans',sans-serif]">
      <div className="absolute left-[430px] top-[8px] w-[390px] h-[13px] bg-[#6f8497] opacity-40 blur-[4px]" />
      <div className="absolute left-[820px] top-[22px] w-[780px] h-[4px] bg-[#5c7386] opacity-60 blur-[3px]" />
      <svg width="22" height="14" viewBox="0 0 22 14" className="relative ml-[1px] shrink-0"><rect y="2" width="18" height="12" fill="#1020b0" /><path d="M0 10l6-3 3 2 4-5 3 2 4-4" stroke="#e00000" strokeWidth="2" fill="none" /></svg>
      <span className="relative ml-[3px] mt-[2px] text-[14px] leading-none text-black whitespace-nowrap">Advanced GET for TS2000i - [FTSEMIB - SPMIB FUTURES, 60]</span>
      <div className="relative ml-auto mr-[3px] h-[26px] self-start flex rounded-b-[4px] border border-t-0 border-[#8fa0b0] overflow-hidden">
        <div className="w-[38px] bg-[linear-gradient(180deg,#9fb0bd,#33536e)] border-r border-[#a0b0bc] flex items-center justify-center"><div className="w-[17px] h-[4px] mt-[12px] bg-white" /></div>
        <div className="w-[35px] bg-[linear-gradient(180deg,#9fb0bd,#33536e)] border-r border-[#a0b0bc] flex items-center justify-center"><svg width="20" height="20" viewBox="0 0 20 20"><path d="M6 2h12v12H14V6H6z" fill="none" stroke="#b8c8d4" strokeWidth="2" /><rect x="3" y="6" width="11" height="12" fill="#c8d4dc" stroke="#fff" /><rect x="6" y="9" width="5" height="5" fill="#38566f" /></svg></div>
        <div className="w-[63px] bg-[linear-gradient(180deg,#d89080,#c02818_60%,#d85040)] flex items-center justify-center"><svg width="22" height="20" viewBox="0 0 22 20"><path d="M3 2l16 16M19 2L3 18" stroke="#fff" strokeWidth="4.500" /></svg></div>
      </div>
    </div>
  );
}

function MenuBar() {
  const Mdi = ({ children }) => <div className="w-[22px] h-[27px] border border-[#b8c8d8] bg-[linear-gradient(180deg,#f8f9fc,#e2e6f0)] flex items-center justify-center">{children}</div>;
  return (
    <div className="h-[30px] shrink-0 border-b-2 border-[#b8bcc4] bg-[linear-gradient(180deg,#ffffff_0%,#f6f8fb_30%,#dfe3f0_42%,#e4e7f1_100%)] flex items-center [font-family:'Noto_Sans',sans-serif]">
      <svg width="12" height="20" viewBox="0 0 12 20" className="ml-[10px] shrink-0"><path d="M5 1h2v6h4v2H7v10H5V9H1V7h4z" fill="#fff" stroke="#000" /></svg>
      <div className="ml-[12px] mt-[2px] flex gap-[15px] text-[14px] leading-none text-[#111]">
        {["File", "Page", "Chart", "Tools", "View", "Window", "Help"].map((m) => <span key={m}>{m}</span>)}
      </div>
      <div className="ml-auto mr-[2px] flex gap-[2px] h-[27px]">
        <Mdi><div className="w-[7px] h-[2px] mt-[6px] bg-[#5a6c80]" /></Mdi>
        <Mdi><svg width="10" height="10" viewBox="0 0 10 10"><path d="M3 .5h6.500v6M.5 3.500h6v6h-6z" fill="none" stroke="#5a6c80" /></svg></Mdi>
        <Mdi><svg width="9" height="9" viewBox="0 0 9 9"><path d="M1 1l7 7M8 1L1 8" stroke="#5a6c80" strokeWidth="2" /></svg></Mdi>
      </div>
    </div>
  );
}

function Tab({ w, t, active }) {
  return (
    <div style={{ width: w }} className="relative h-[19px] shrink-0 flex items-center justify-center">
      <svg width={w + 2} height="19" viewBox={`0 0 ${w + 2} 19`} className="absolute left-[-1px] top-0">
        <polygon points={`0.5,0 5.5,18.500 ${w - 3.5},18.500 ${w + 1.5},0`} fill={active ? "#ffffff" : "#f0f0f0"} stroke="#000" />
      </svg>
      <span className="relative -mt-[2px] text-[11px] leading-none text-[#303030] whitespace-nowrap">{t}</span>
    </div>
  );
}

function Tabs() {
  const B = ({ d }) => <div className={`w-[20px] h-[19px] ${raised} flex items-center justify-center`}><svg width="8" height="10" viewBox="0 0 8 10"><path d={d} fill="#000" /></svg></div>;
  return (
    <div className="h-[20px] shrink-0 bg-[#f0f0f0] flex items-start pl-[1px] border-r-2 border-[#404040]">
      <B d="M6 0v10L1 5z" /><B d="M2 0v10l5-5z" />
      <div className="w-[4px] shrink-0" />
      <Tab w={57} t="Osc 5,35" />
      <Tab w={58} t="Osc 24,96" />
      <Tab w={72} t="ADX/DMI 96" active />
      <Tab w={37} t="CCI 96" />
      <Tab w={95} t="MACD 24, 48, 48" />
    </div>
  );
}

function DateAxis() {
  return (
    <div className="h-[22px] shrink-0 flex">
      <div className="w-[1790px] shrink-0 pl-[2px]">
        <div className="h-[20px] bg-black flex text-[16px] font-bold leading-[21px] text-white whitespace-nowrap border-r border-[#808080] shadow-[0_1px_0_#808080]">
          <div className="w-[136px] shrink-0" />
          <div className="w-[264px] shrink-0 border-l border-white pl-[2px]">10/02/23</div>
          <div className="w-[270px] shrink-0 border-l border-white pl-[2px]">10/09/23</div>
          <div className="w-[540px] shrink-0 border-l border-white pl-[2px] flex">
            <span className="w-[228px] shrink-0">10/16/23</span>
            <span className="bg-[#0000ff] w-[128px] text-center shrink-0">10/23/23 - 14:00</span>
          </div>
          <div className="flex-1 border-l border-white pl-[2px]">10/30/23</div>
        </div>
      </div>
      <div className="w-[61px] shrink-0 bg-[#0000ff]" />
    </div>
  );
}

function Header() {
  return (
    <div className="h-[19px] shrink-0 bg-[#0000ff] flex items-center pl-[8px] pr-[5px] text-[16px] font-bold leading-none text-white whitespace-nowrap">
      <span className="w-[660px] shrink-0">11/02/23</span>
      <span className="w-[141px] shrink-0">O: 28105.000</span>
      <span className="w-[94px] shrink-0">28485.000</span>
      <span className="w-[23px] shrink-0 text-[#ff0000]">L:</span>
      <span className="w-[93px] shrink-0">28090.000</span>
      <span className="w-[24px] shrink-0">C:</span>
      <span>28425.000</span>
      <span className="ml-auto text-[#ff0000]">-1.000</span>
    </div>
  );
}

export default function App() {
  return (
    <div className="w-[1920px] h-[1080px] overflow-hidden flex flex-col bg-[#f0f0f0] [font-family:'Liberation_Sans',Arial,sans-serif]">
      <TitleBar />
      <MenuBar />
      <Toolbar />
      <div className="h-[966px] shrink-0 flex">
        <LeftBar />
        <div className="w-[1851px] shrink-0 flex flex-col">
          <div className="h-[1px] bg-[#a0a0a0]" />
          <Header />
          <div className="h-[5px] bg-white" />
          <div className="h-[1px] bg-[#909090]" />
          <MainChart />
          <div className="h-[4px] bg-white" />
          <div className="h-[2px] bg-[#a0a0a0]" />
          <div className="h-[308px] shrink-0 flex">
            <div className="w-[1790px] shrink-0 flex flex-col">
              <LowerChart />
              <Tabs />
            </div>
            <LowerAxis />
          </div>
          <div className="h-[6px] shrink-0 flex flex-col justify-center"><div className="h-[3px] bg-white" /></div>
          <DateAxis />
        </div>
        <RightBar />
      </div>
      <div className="h-[24px] shrink-0 flex items-end border-b border-[#50606c] text-[14px] leading-none text-[#222] [font-family:'Noto_Sans',sans-serif]">
        <span className="ml-[2px] mb-[1px] whitespace-nowrap">For Help, press F1</span>
        <div className="ml-auto mr-[4px] w-[482px] h-[18px] border-l border-t border-[#a0a0a0] pl-[2px] whitespace-nowrap flex items-center">Page: 1 - FTSEMIB B</div>
      </div>
    </div>
  );
}
